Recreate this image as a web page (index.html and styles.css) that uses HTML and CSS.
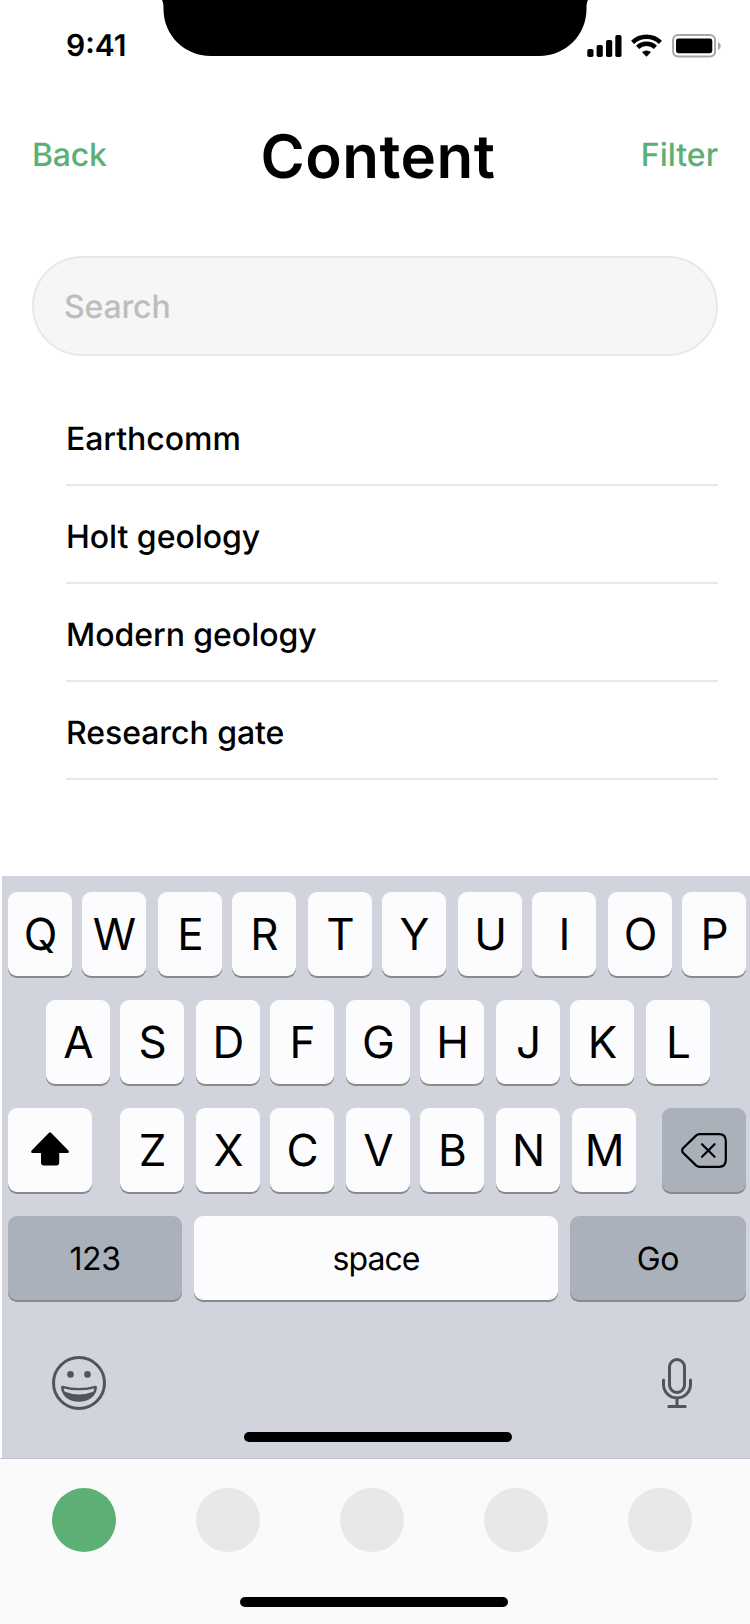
FILE: index.html
```html
<!DOCTYPE html>
<html lang="en">
<head>
<meta charset="utf-8">
<title>Content</title>
<link rel="stylesheet" href="styles.css">
</head>
<body>
<div class="screen">
  <svg class="notch" viewBox="0 0 426 56"><path d="M0 0C1 2 1.5 4 1.5 7V9C1.5 35 22 56 49 56H377C404 56 424.5 35 424.5 9V7C424.5 4 425 2 426 0Z"/></svg>
  <header class="status">
    <span class="time">9:41</span>
    <div class="status-icons">
      <svg class="signal" viewBox="0 0 35 24"><rect x=".3" y="15" width="6.2" height="8" rx="1.8"/><rect x="9.6" y="11" width="6.2" height="12" rx="1.8"/><rect x="19" y="6" width="6.2" height="17" rx="1.8"/><rect x="28.3" y="1" width="6.2" height="22" rx="1.8"/></svg>
      <svg class="wifi" viewBox="0 0 31 24"><g fill="none" stroke="#000" stroke-width="4.4"><path d="M1.6 8.4A20 20 0 0 1 29.4 8.4"/><path d="M6.6 13.4A12.8 12.8 0 0 1 24.4 13.4"/></g><path d="M11 18.1A7 7 0 0 1 20 18.1L15.5 22.8Z"/></svg>
      <svg class="battery" viewBox="0 0 50 24"><rect x="1.1" y="1.1" width="42" height="21.4" rx="5" fill="none" stroke="#a6a6a6" stroke-width="2"/><rect x="4" y="4.6" width="36.3" height="14.6" rx="2.4"/><path d="M46 8C49.6 9.4 49.6 14.6 46 16Z" fill="#a6a6a6"/></svg>
    </div>
  </header>
  <nav class="navbar">
    <a class="nav-link">Back</a>
    <h1 class="title">Content</h1>
    <a class="nav-link">Filter</a>
  </nav>
  <div class="search">Search</div>
  <ul class="list">
    <li class="item">Earthcomm</li>
    <li class="item">Holt geology</li>
    <li class="item">Modern geology</li>
    <li class="item">Research gate</li>
  </ul>
  <section class="keyboard">
    <div class="row">
      <span class="key">Q</span><span class="key">W</span><span class="key">E</span><span class="key">R</span><span class="key">T</span><span class="key">Y</span><span class="key">U</span><span class="key">I</span><span class="key">O</span><span class="key">P</span>
    </div>
    <div class="row row-home">
      <span class="key">A</span><span class="key">S</span><span class="key">D</span><span class="key">F</span><span class="key">G</span><span class="key">H</span><span class="key">J</span><span class="key">K</span><span class="key">L</span>
    </div>
    <div class="row row-shift">
      <span class="key key-wide shift"><svg class="shift-icon" viewBox="0 0 38 34"><path d="M18 .8Q19 -.2 20 .8L37.4 18.6Q38.6 21 36.4 21H28.2V31Q28.2 33.4 25.8 33.4H12.4Q10 33.4 10 31V21H1.6Q-.6 21 .6 18.6Z"/></svg></span>
      <span class="key">Z</span><span class="key">X</span><span class="key">C</span><span class="key">V</span><span class="key">B</span><span class="key">N</span><span class="key">M</span>
      <span class="key key-wide key-dark delete"><svg class="delete-icon" viewBox="0 0 46 35"><g fill="none" stroke="#000" stroke-width="2.2" stroke-linecap="round" stroke-linejoin="round"><path d="M18.5 1.2H38Q44.8 1.2 44.8 8V27Q44.8 33.8 38 33.8H18.5Q16.6 33.8 15 32.4L2 19.8Q.4 17.5 2 15.2L15 2.6Q16.6 1.2 18.5 1.2Z"/><path d="M21 11.2L33.6 23.8M33.6 11.2L21 23.8"/></g></svg></span>
    </div>
    <div class="row row-bottom">
      <span class="key key-text key-dark">123</span>
      <span class="key key-text space">space</span>
      <span class="key key-text key-dark go">Go</span>
    </div>
    <div class="tools">
      <svg class="emoji" viewBox="0 0 54 54"><circle cx="27" cy="27" r="25.5" fill="none" stroke="#50555c" stroke-width="3"/><circle cx="18.5" cy="18.4" r="3.3"/><circle cx="35.5" cy="18.4" r="3.3"/><path fill-rule="evenodd" d="M10.6 29.8Q27 34.4 43.4 29.8Q45 29.5 45 31.4C44.4 40 37 45.7 27 45.7S9.6 40 9 31.4Q9 29.5 10.6 29.8ZM11.8 32.4C11.9 34 12.3 35 13 35.8Q27 41.4 41 35.8C41.7 35 42.1 34 42.2 32.4Q27 36.2 11.8 32.4Z"/></svg>
      <svg class="mic" viewBox="0 0 30 50"><g fill="none" stroke="#50555c" stroke-width="3" stroke-linecap="round"><rect x="7.5" y="1.5" width="15" height="33" rx="7.5"/><path d="M1.5 22V26.5A13.5 13.5 0 0 0 28.5 26.5V22M15 40V48M6.8 48.4H23.2"/></g></svg>
    </div>
    <div class="home home-keyboard"></div>
  </section>
  <footer class="tabbar">
    <div class="tabs"><i class="tab active"></i><i class="tab"></i><i class="tab"></i><i class="tab"></i><i class="tab"></i></div>
    <div class="home home-tabs"></div>
  </footer>
</div>
</body>
</html>
```

FILE: styles.css
```css
* { box-sizing: border-box; }
body { margin: 0; background: #fff; font-family: Inter, "Liberation Sans", sans-serif; color: #000; text-rendering: geometricPrecision; }
svg { display: block; flex: none; }
.screen { position: relative; width: 750px; height: 1624px; overflow: hidden; display: flex; flex-direction: column; }
.notch { position: absolute; left: 162px; top: 0; width: 426px; height: 56px; }
.status { height: 88px; padding: 33px 28px 0 66px; display: flex; justify-content: space-between; align-items: flex-start; }
.time { padding-top: 1px; font-size: 30px; font-weight: 600; line-height: 24px; }
.status-icons { display: flex; padding-top: 1px; }
.signal { width: 35px; height: 24px; margin-right: 9px; }
.wifi { width: 31px; height: 24px; margin-right: 10px; }
.battery { width: 50px; height: 24px; }
.navbar { height: 168px; padding: 0 32px; display: grid; grid-template-columns: 1fr auto 1fr; align-items: start; }
.nav-link { padding-top: 47px; font-size: 32px; font-weight: 500; line-height: 40px; color: #5db075; }
.nav-link:first-child { letter-spacing: -0.2px; }
.nav-link:last-child { text-align: right; }
.title { margin: 0; padding: 33px 0 0 6px; font-size: 60px; font-weight: 600; line-height: 72px; letter-spacing: 0.5px; }
.search { height: 100px; margin: 0 32px; padding: 1px 30px 0; border: 2px solid #e8e8e8; border-radius: 50px; background: #f6f6f6; color: #bdbdbd; font-size: 32px; font-weight: 500; line-height: 96px; letter-spacing: -0.15px; }
.list { margin: 32px 32px 0 66px; padding: 0; list-style: none; height: 488px; }
.item { height: 98px; padding-top: 31px; border-bottom: 2px solid #e8e8e8; font-size: 32px; font-weight: 500; line-height: 40px; letter-spacing: -0.05px; }
.keyboard { margin-left: 2px; height: 582px; padding: 16px 4px 0 6px; background: #d1d4dc; display: flex; flex-direction: column; }
.row { display: flex; margin-bottom: 24px; }
.key { flex: none; width: 64px; height: 84px; margin-right: 12px; padding-left: 1px; border-radius: 9px; background: #fcfcfe; box-shadow: 0 2px 0 #898a8d; font-size: 44px; line-height: 84px; text-align: center; }
.row .key:nth-child(odd) { margin-right: 10px; }
.row .key:last-child { margin-right: 0; }
.row-home { padding-left: 38px; }
.key-wide { width: 84px; padding: 0; display: flex; align-items: center; justify-content: center; }
.row-shift .key:nth-child(even) { margin-right: 12px; }
.row-shift .key.shift { margin-right: 28px; }
.row-shift .key:nth-child(7) { margin-right: 12px; }
.row-shift .key:nth-child(8) { margin-right: 26px; }
.key-dark { background: #abb1bb; }
.shift-icon { width: 38px; height: 34px; margin-top: -2px; }
.delete-icon { width: 46px; height: 35px; }
.key-text { width: 174px; padding: 1px 0 0; font-size: 32px; letter-spacing: -0.4px; }
.row-bottom .key:nth-child(-n+2) { margin-right: 12px; }
.key.space { width: 364px; letter-spacing: -0.9px; }
.go { width: 176px; }
.tools { display: flex; justify-content: space-between; padding: 32px 54px 0 44px; height: 108px; fill: #50555c; }
.emoji { width: 54px; height: 54px; }
.mic { width: 30px; height: 50px; margin-top: 2px; }
.home { width: 268px; height: 10px; border-radius: 5px; background: #000; }
.home-keyboard { margin-left: 236px; }
.tabbar { height: 166px; border-top: 1px solid #bdc5cd; background: #fafafa; }
.tabs { display: flex; gap: 80px; padding: 29px 0 45px 52px; }
.tab { width: 64px; height: 64px; border-radius: 50%; background: #e8e8e8; }
.active { background: #5db075; }
.home-tabs { margin-left: 240px; }
```
